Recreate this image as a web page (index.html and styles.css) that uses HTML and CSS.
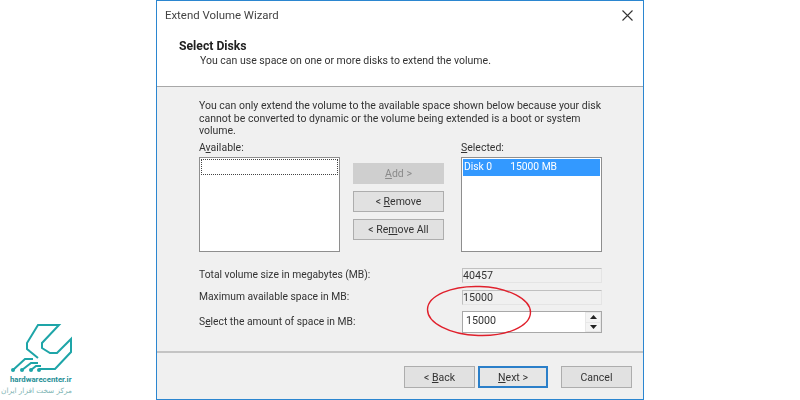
FILE: index.html
```html
<!DOCTYPE html>
<html lang="en">
<head>
<meta charset="utf-8">
<title>Extend Volume Wizard</title>
<link rel="stylesheet" href="styles.css">
</head>
<body>
<div class="logo">
  <svg class="logo-mark" width="66" height="52" viewBox="0 0 66 52" fill="none" stroke="#1ea5a8" stroke-width="2" stroke-linejoin="miter" stroke-linecap="butt">
    <path d="M30 36 L19 27 V21 L30 3 H51 L34 21 V26 L42 31 H49 L63 17 V30 L47 47 H31"/>
    <path d="M5 48 L17 37 H25"/>
    <path d="M14 48 L23 41 H30"/>
    <path d="M23 48 L28 44 H33"/>
    <circle cx="5" cy="48" r="2" fill="#1ea5a8" stroke="none"/>
    <circle cx="14" cy="48" r="2" fill="#1ea5a8" stroke="none"/>
    <circle cx="23" cy="48" r="2" fill="#1ea5a8" stroke="none"/>
    <circle cx="31" cy="48" r="2" fill="#1ea5a8" stroke="none"/>
  </svg>
  <div class="logo-name">hardwarecenter.ir</div>
  <div class="logo-fa" dir="rtl" lang="fa">مرکز سخت افزار ایران</div>
</div>
<div class="dialog">
  <div class="titlebar">
    <span>Extend Volume Wizard</span>
    <svg class="close" width="11" height="11" viewBox="0 0 11 11"><path d="M.5.5l10 10M10.5.5l-10 10" stroke="#333" stroke-width="1.1" fill="none"/></svg>
  </div>
  <header class="head">
    <h1>Select Disks</h1>
    <p>You can use space on one or more disks to extend the volume.</p>
  </header>
  <main class="body">
    <p class="note">You can only extend the volume to the available space shown below because your disk cannot be converted to dynamic or the volume being extended is a boot or system volume.</p>
    <div class="pick">
      <div class="col">
        <label>A<u>v</u>ailable:</label>
        <div class="list"><div class="row-empty"></div></div>
      </div>
      <div class="actions">
        <button class="btn off" disabled><u>A</u>dd &gt;</button>
        <button class="btn">&lt; <u>R</u>emove</button>
        <button class="btn">&lt; Re<u>m</u>ove All</button>
      </div>
      <div class="col">
        <label><u>S</u>elected:</label>
        <div class="list"><div class="row-sel"><span>Disk 0</span><span>15000 MB</span></div></div>
      </div>
    </div>
    <div class="fields">
      <div class="field"><span>Total volume size in megabytes (MB):</span><div class="ro">40457</div></div>
      <div class="field"><span>Maximum available space in MB:</span><div class="ro">15000</div></div>
      <div class="field field-spin"><span>S<u>e</u>lect the amount of space in MB:</span>
        <div class="spin">
          <div class="spin-val">15000</div>
          <div class="spin-btns">
            <div class="arrow"><svg width="7" height="4" viewBox="0 0 7 4"><path d="M3.5 0L7 4H0z" fill="#222"/></svg></div>
            <div class="arrow"><svg width="7" height="4" viewBox="0 0 7 4"><path d="M0 0h7L3.5 4z" fill="#222"/></svg></div>
          </div>
        </div>
      </div>
    </div>
    <svg class="ring" width="110" height="56" viewBox="0 0 110 56"><ellipse cx="55" cy="28" rx="51.5" ry="24.5" transform="rotate(2 55 28)" fill="none" stroke="#e0202c" stroke-width="1.4"/></svg>
  </main>
  <footer class="foot">
    <button class="btn nav">&lt; <u>B</u>ack</button>
    <button class="btn nav primary"><u>N</u>ext &gt;</button>
    <button class="btn nav cancel">Cancel</button>
  </footer>
</div>
</body>
</html>
```
FILE: styles.css
```css
* { box-sizing: border-box; }
html, body { margin: 0; height: 400px; background: #fff; overflow: hidden; }
body { position: relative; display: flex; justify-content: center; font-family: Roboto, "Noto Sans", sans-serif; font-size: 10.5px; color: #333; }
p, h1 { margin: 0; }
u { text-underline-offset: 1px; }
.dialog { width: 488px; height: 400px; border: 1px solid #2b86d0; display: flex; flex-direction: column; background: #f0f0f0; filter: blur(0.3px); }
.titlebar { height: 30px; padding: 7px 10px 0 8px; font-size: 11.4px; background: #fff; display: flex; justify-content: space-between; align-items: flex-start; color: #444; }
.close { margin-top: 2px; }
.head { height: 56px; padding: 8px 0 0 22px; background: #fff; border-bottom: 1px solid #a8a8a8; }
.head h1 { font-size: 12.2px; font-weight: 700; line-height: 14px; color: #222; }
.head p { padding-left: 21px; line-height: 16px; }
.body { position: relative; flex: 1; padding: 13px 41px 0 42px; border-bottom: 2px solid #c4c4c4; }
.note { line-height: 12.7px; width: 403px; }
.pick { display: flex; margin-top: 1px; }
.col { flex: 0 0 141px; display: flex; flex-direction: column; }
.col label { line-height: 17px; height: 18px; }
.list { height: 95px; background: #fff; border: 1px solid #8e8e8e; padding: 1px; }
.row-empty { height: 16px; border: 1px dotted #444; }
.row-sel { height: 17px; background: #3399ff; color: #fff; display: flex; gap: 18px; padding-left: 1px; line-height: 16px; font-size: 10.3px; }
.actions { flex: 0 0 121px; padding: 24px 0 0 13px; display: flex; flex-direction: column; gap: 7px; align-items: flex-start; }
.btn { width: 91px; height: 21px; padding: 0; background: #e1e1e1; border: 1px solid #adadad; font: inherit; color: #333; }
.btn.off { background: #cfcfcf; border-color: #cfcfcf; color: #8a8a8a; }
.fields { display: flex; flex-direction: column; margin-top: 16px; gap: 7px; font-size: 10.3px; }
.field { display: flex; justify-content: space-between; align-items: center; width: 403px; }
.field-spin { margin-top: -1px; }
.field > span { position: relative; top: -1px; }
.ro { width: 140px; height: 15px; border: 1px solid #e4e4e4; border-top-color: #c0c0c0; border-left-color: #c0c0c0; line-height: 14px; padding-left: 0; background: #f0f0f0; font-size: 10.7px; }
.spin { width: 140px; height: 22px; display: flex; background: #fff; border: 1px solid #a8a8a8; font-size: 10.7px; }
.spin-val { flex: 1; padding-left: 3px; line-height: 18px; }
.spin-btns { width: 16px; display: flex; flex-direction: column; background: #e8e8e8; gap: 1px; padding: 1px; }
.arrow { flex: 1; background: #f4f4f4; display: flex; align-items: center; justify-content: center; }
.ring { position: absolute; left: 267px; top: 196px; }
.foot { height: 46px; padding: 13px 11px 0 0; display: flex; justify-content: flex-end; }
.nav { width: 71px; height: 22px; }
.primary { width: 70px; margin-left: 3px; border: 2px solid #2b7fc9; background: #e6e6e6; }
.cancel { margin-left: 13px; }
.logo { position: absolute; left: 8px; top: 322px; width: 70px; }
.logo-mark { display: block; }
.logo-name { font-family: Roboto, sans-serif; font-size: 7.8px; font-weight: 700; color: #1f8f96; line-height: 11px; margin-left: 2px; white-space: nowrap; }
.logo-fa { font-family: "DejaVu Sans", sans-serif; font-size: 7.3px; color: #7fb5b5; line-height: 12px; width: 64px; text-align: center; white-space: nowrap; }
```
